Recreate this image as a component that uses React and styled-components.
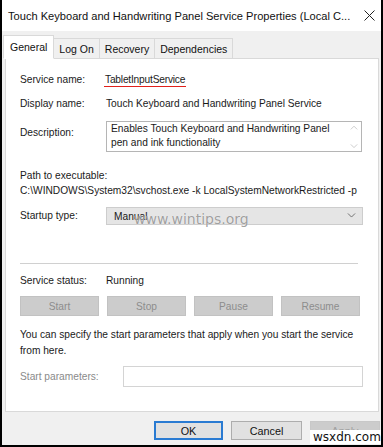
import styled, { createGlobalStyle } from "styled-components";

const GlobalStyle = createGlobalStyle`
  html, body {
    margin: 0;
    padding: 0;
    background: #ffffff;
  }
  * {
    box-sizing: border-box;
  }
`;

const Window = styled.div`
  position: relative;
  width: 383px;
  height: 447px;
  display: flex;
  flex-direction: column;
  border-left: 2px solid #000;
  border-right: 2px solid #000;
  border-bottom: 2px solid #000;
  font-family: "Liberation Sans", Arial, sans-serif;
  font-size: 10.2px;
  color: #1a1a1a;
  overflow: hidden;
`;

const TitleBar = styled.div`
  height: 31px;
  background: #ffffff;
  display: flex;
  align-items: center;
  justify-content: space-between;
  padding: 0 6px 0 6px;
`;

const Title = styled.div`
  font-size: 11.1px;
  color: #111;
  white-space: nowrap;
`;

const CloseBtn = styled.div`
  width: 12px;
  height: 12px;
  display: flex;
  align-items: center;
  justify-content: center;
`;

const Body = styled.div`
  flex: 1;
  background: #f0f0f0;
  padding: 4px 1px 0 1px;
  display: flex;
  flex-direction: column;
`;

const TabRow = styled.div`
  display: flex;
  align-items: flex-end;
  height: 24px;
  position: relative;
  z-index: 1;
  margin-bottom: -1px;
`;

const Tab = styled.div`
  height: ${(p) => (p.$active ? "24px" : "21px")};
  padding: 0 ${(p) => (p.$active ? "6px" : "5px")};
  margin-left: ${(p) => (p.$first ? "0" : "-1px")};
  display: flex;
  align-items: center;
  background: ${(p) => (p.$active ? "#ffffff" : "#f0f0f0")};
  border: 1px solid #d9d9d9;
  border-bottom: ${(p) => (p.$active ? "1px solid #ffffff" : "1px solid #d9d9d9")};
  font-size: 10.5px;
  color: #111;
  position: relative;
  z-index: ${(p) => (p.$active ? 2 : 1)};
`;

const Panel = styled.div`
  margin-left: 2px;
  width: 374px;
  height: 354px;
  background: #ffffff;
  border: 1px solid #d9d9d9;
  padding: 14px 14px 0 14px;
  display: flex;
  flex-direction: column;
`;

const Row = styled.div`
  display: grid;
  grid-template-columns: 86px 1fr;
  align-items: ${(p) => (p.$top ? "start" : "center")};
  margin-top: ${(p) => p.$mt || 0}px;
  min-height: 14px;
`;

const Label = styled.div`
  line-height: 14px;
  color: ${(p) => (p.$disabled ? "#8a8a8a" : "#1a1a1a")};
  padding-top: ${(p) => p.$pt || 0}px;
`;

const Value = styled.div`
  line-height: 14px;
  white-space: nowrap;
`;

const Underlined = styled.span`
  display: inline-block;
  letter-spacing: -0.2px;
  padding: 0 1px;
  margin-left: -2px;
  border-bottom: 1.5px solid #e0201b;
  line-height: 13px;
`;

const TextArea = styled.div`
  height: 31px;
  border: 1px solid #b5b5b5;
  display: flex;
  margin-right: 2px;
`;

const TextAreaText = styled.div`
  flex: 1;
  padding: 0 4px;
  line-height: 14px;
  white-space: nowrap;
`;

const ScrollBar = styled.div`
  width: 15px;
  display: flex;
  flex-direction: column;
  align-items: center;
  justify-content: space-between;
  padding: 3px 0 2px;
`;

const PlainLine = styled.div`
  line-height: 14px;
  margin-top: ${(p) => p.$mt || 0}px;
  white-space: nowrap;
  overflow: hidden;
`;

const Select = styled.div`
  height: 18px;
  background: #e5e5e5;
  border: 1px solid #cdcdcd;
  display: flex;
  align-items: center;
  justify-content: space-between;
  padding: 0 6px 0 7px;
  margin-right: 1px;
`;

const Separator = styled.div`
  height: 1px;
  background: #d0d0d0;
  margin: 38px 6px 0 0;
`;

const ButtonRow = styled.div`
  display: grid;
  grid-template-columns: repeat(4, 79px);
  column-gap: 8px;
  margin-top: 8px;
`;

const ServiceButton = styled.div`
  height: 20px;
  background: #cccccc;
  border: 1px solid #c2c2c2;
  color: #8d8d8d;
  display: flex;
  align-items: center;
  justify-content: center;
`;

const Paragraph = styled.div`
  margin-top: 11px;
  line-height: 16px;
  white-space: nowrap;
`;

const Input = styled.div`
  height: 21px;
  border: 1px solid #d4d4d4;
  margin-left: 17px;
  margin-right: 1px;
`;

const Footer = styled.div`
  display: flex;
  justify-content: flex-end;
  gap: 8px;
  padding: 9px 0 0 0;
`;

const DialogButton = styled.div`
  width: ${(p) => p.$w || 70}px;
  height: 19px;
  display: flex;
  align-items: center;
  justify-content: center;
  font-size: 10.8px;
  background: ${(p) => (p.$disabled ? "#cccccc" : "#e1e1e1")};
  color: ${(p) => (p.$disabled ? "#a0a0a0" : "#111")};
  border: ${(p) =>
    p.$primary ? "2px solid #2a7bd2" : p.$disabled ? "1px solid #c8c8c8" : "1px solid #adadad"};
`;

const Watermark = styled.div`
  position: absolute;
  left: 132px;
  top: 211px;
  font-family: "DejaVu Sans", sans-serif;
  font-size: 14px;
  color: rgba(120, 120, 120, 0.7);
  text-shadow: 0 0 1px rgba(255, 255, 255, 0.9);
  pointer-events: none;
`;

const Stamp = styled.div`
  position: absolute;
  left: 308px;
  top: 430px;
  background: #ffffff;
  padding: 0 3px;
  font-family: "DejaVu Sans", sans-serif;
  font-size: 12px;
  line-height: 14px;
  color: #111;
`;

const Chevron = ({ up, size = 9, color = "#777" }) => (
  <svg width={size} height={size * 0.6} viewBox="0 0 10 6">
    <path
      d={up ? "M1 5.5 L5 1.5 L9 5.5" : "M1 0.5 L5 4.5 L9 0.5"}
      fill="none"
      stroke={color}
      strokeWidth="1"
    />
  </svg>
);

const tabs = ["General", "Log On", "Recovery", "Dependencies"];
const actions = ["Start", "Stop", "Pause", "Resume"];

export default function App() {
  return (
    <>
      <GlobalStyle />
      <Window>
        <TitleBar>
          <Title>Touch Keyboard and Handwriting Panel Service Properties (Local C...</Title>
          <CloseBtn>
            <svg width="11" height="11" viewBox="0 0 11 11">
              <path d="M0.5 0.5 L10.5 10.5 M10.5 0.5 L0.5 10.5" stroke="#222" strokeWidth="1" />
            </svg>
          </CloseBtn>
        </TitleBar>
        <Body>
          <TabRow>
            {tabs.map((t, i) => (
              <Tab key={t} $active={i === 0} $first={i === 0}>
                {t}
              </Tab>
            ))}
          </TabRow>
          <Panel>
            <Row>
              <Label>Service name:</Label>
              <Value>
                <Underlined>TabletInputService</Underlined>
              </Value>
            </Row>
            <Row $mt={10}>
              <Label>Display name:</Label>
              <Value>Touch Keyboard and Handwriting Panel Service</Value>
            </Row>
            <Row $mt={10} $top>
              <Label $pt={5}>Description:</Label>
              <TextArea>
                <TextAreaText>
                  Enables Touch Keyboard and Handwriting Panel
                  <br />
                  pen and ink functionality
                </TextAreaText>
                <ScrollBar>
                  <Chevron up size={8} color="#c0c0c0" />
                  <Chevron size={8} color="#c0c0c0" />
                </ScrollBar>
              </TextArea>
            </Row>
            <PlainLine $mt={17}>Path to executable:</PlainLine>
            <PlainLine $mt={1}>
              C:\WINDOWS\System32\svchost.exe -k LocalSystemNetworkRestricted -p
            </PlainLine>
            <Row $mt={9}>
              <Label>Startup type:</Label>
              <Select>
                <span>Manual</span>
                <Chevron size={9} color="#666" />
              </Select>
            </Row>
            <Separator />
            <Row $mt={10}>
              <Label>Service status:</Label>
              <Value>Running</Value>
            </Row>
            <ButtonRow>
              {actions.map((a) => (
                <ServiceButton key={a}>{a}</ServiceButton>
              ))}
            </ButtonRow>
            <Paragraph>
              You can specify the start parameters that apply when you start the service
              <br />
              from here.
            </Paragraph>
            <Row $mt={7}>
              <Label $disabled>Start parameters:</Label>
              <Input />
            </Row>
          </Panel>
          <Footer>
            <DialogButton $primary $w={69}>OK</DialogButton>
            <DialogButton $w={71}>Cancel</DialogButton>
            <DialogButton $disabled $w={70}>Apply</DialogButton>
          </Footer>
        </Body>
        <Watermark>www.wintips.org</Watermark>
        <Stamp>wsxdn.com</Stamp>
      </Window>
    </>
  );
}
